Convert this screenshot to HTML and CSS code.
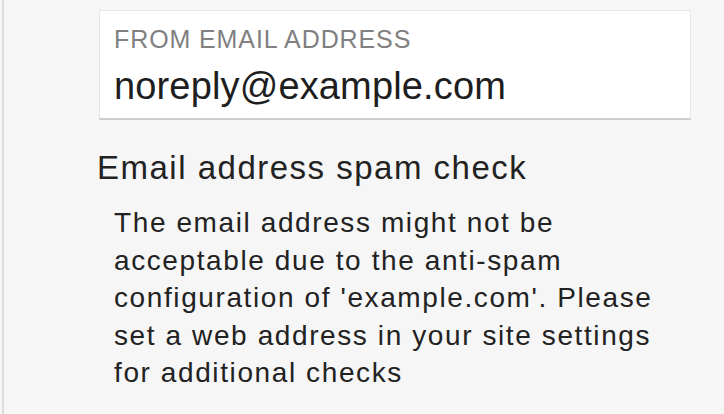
FILE: index.html
```html
<!DOCTYPE html>
<html>
<head>
<meta charset="utf-8">
<link rel="stylesheet" href="styles.css">
</head>
<body>
<div class="pane">
  <div class="field">
    <div class="field-label">FROM EMAIL ADDRESS</div>
    <div class="field-value">noreply@example.com</div>
  </div>
  <h2 class="check-title">Email address spam check</h2>
  <p class="check-text">The email address might not be acceptable due to the anti-spam configuration of 'example.com'. Please set a web address in your site settings for additional checks</p>
</div>
</body>
</html>
```
FILE: styles.css
```css
html, body {
  margin: 0;
  padding: 0;
  height: 100%;
  background: #f6f6f6;
}
body {
  font-family: "Liberation Sans", Arial, sans-serif;
  color: #222;
  padding-left: 2px;
  box-sizing: border-box;
}
.pane {
  height: 100%;
  border-left: 2px solid #dcdcdf;
  box-sizing: border-box;
  padding: 10px 0 0 95px;
}
.field {
  width: 592px;
  box-sizing: border-box;
  background: #ffffff;
  border: 1px solid #e8e8e8;
  border-bottom: 2px solid #cdcdcd;
  padding: 13px 14px 9px 14px;
}
.field-label {
  font-size: 25px;
  line-height: 30px;
  color: #808080;
  letter-spacing: 0.9px;
}
.field-value {
  font-size: 38px;
  line-height: 46px;
  margin-top: 9px;
  letter-spacing: 0.15px;
  color: #1e1e1e;
}
.check-title {
  font-size: 33px;
  font-weight: normal;
  line-height: 40px;
  letter-spacing: 1.5px;
  margin: 28px 0 0 -2px;
  color: #222;
}
.check-text {
  font-size: 28px;
  line-height: 37.6px;
  letter-spacing: 1.6px;
  margin: 16px 0 0 15px;
  width: 560px;
  color: #222;
}
```
